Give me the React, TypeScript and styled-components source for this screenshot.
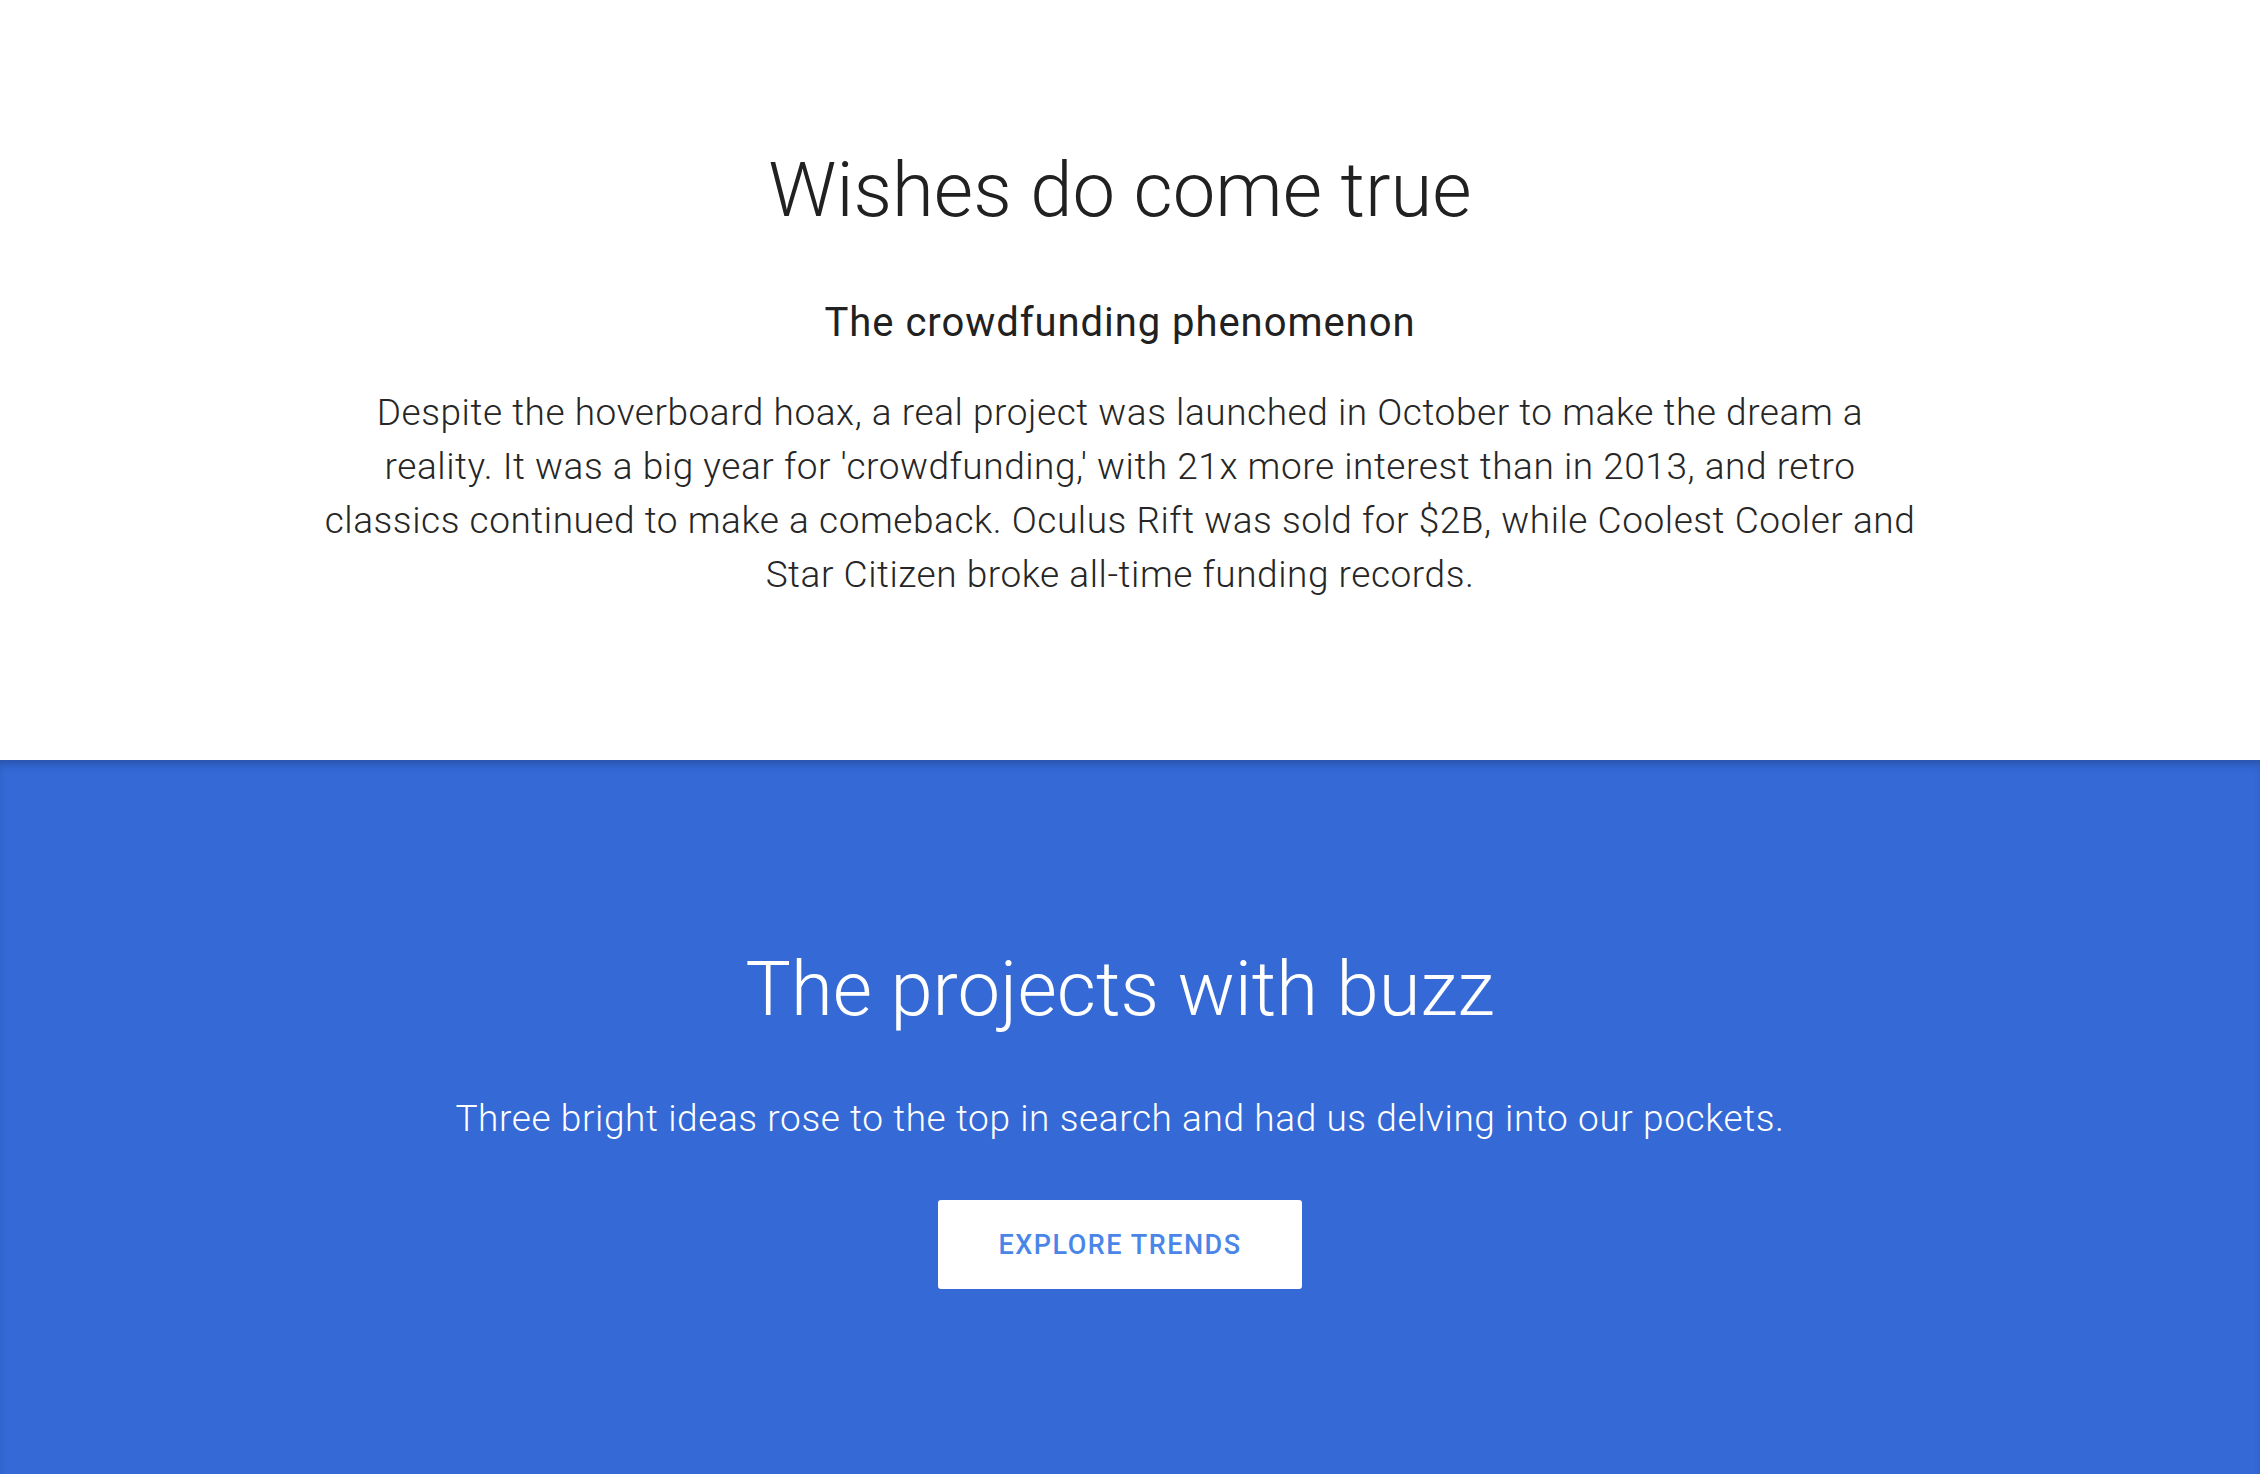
import React from "react";
import styled, { createGlobalStyle } from "styled-components";

const Global = createGlobalStyle`
  html, body { margin: 0; padding: 0; background: #ffffff; }
  body { font-family: Roboto, "Noto Sans", "Liberation Sans", sans-serif; -webkit-font-smoothing: antialiased; }
  * { box-sizing: border-box; }
`;

const Page = styled.div`
  display: flex;
  flex-direction: column;
  min-height: 1474px;
`;

const IntroSection = styled.section`
  display: flex;
  flex-direction: column;
  align-items: center;
  padding: 145px 20px 158px 0;
  background: #ffffff;
  color: #212121;
  text-align: center;
`;

const Heading = styled.h1<{ $light?: boolean }>`
  margin: 0;
  font-size: 76px;
  line-height: 90px;
  font-weight: 300;
  color: ${(p) => (p.$light ? "#ffffff" : "#212121")};
`;

const SubHeading = styled.h2`
  margin: 64px 0 0;
  font-size: 40px;
  line-height: 48px;
  font-weight: 400;
  letter-spacing: 0.95px;
`;

const Body = styled.p`
  margin: 39px 0 0;
  max-width: 1600px;
  font-size: 37px;
  line-height: 54px;
  font-weight: 300;
  letter-spacing: 0.55px;
  color: #262626;
`;

const BuzzSection = styled.section`
  flex: 1;
  display: flex;
  flex-direction: column;
  align-items: center;
  padding: 184px 20px 120px 0;
  background: #3469d6;
  box-shadow: inset 0 7px 8px -3px rgba(0, 0, 0, 0.22);
  text-align: center;
`;

const Lead = styled.p`
  margin: 58px 0 0;
  font-size: 37px;
  line-height: 54px;
  font-weight: 300;
  letter-spacing: 0.6px;
  color: #ffffff;
`;

const CtaButton = styled.button`
  margin-top: 54px;
  width: 364px;
  height: 89px;
  border: none;
  border-radius: 3px;
  background: #ffffff;
  color: #4a86e8;
  font-family: Roboto, "Noto Sans", "Liberation Sans", sans-serif;
  font-size: 27px;
  font-weight: 500;
  letter-spacing: 1.5px;
  text-transform: uppercase;
  cursor: pointer;
`;

export default function App() {
  return (
    <Page>
      <Global />
      <IntroSection>
        <Heading>Wishes do come true</Heading>
        <SubHeading>The crowdfunding phenomenon</SubHeading>
        <Body>
          Despite the hoverboard hoax, a real project was launched in October to make the dream a
          reality. It was a big year for 'crowdfunding,' with 21x more interest than in 2013, and retro
          classics continued to make a comeback. Oculus Rift was sold for $2B, while Coolest Cooler and
          Star Citizen broke all-time funding records.
        </Body>
      </IntroSection>
      <BuzzSection>
        <Heading $light>The projects with buzz</Heading>
        <Lead>Three bright ideas rose to the top in search and had us delving into our pockets.</Lead>
        <CtaButton>Explore Trends</CtaButton>
      </BuzzSection>
    </Page>
  );
}
